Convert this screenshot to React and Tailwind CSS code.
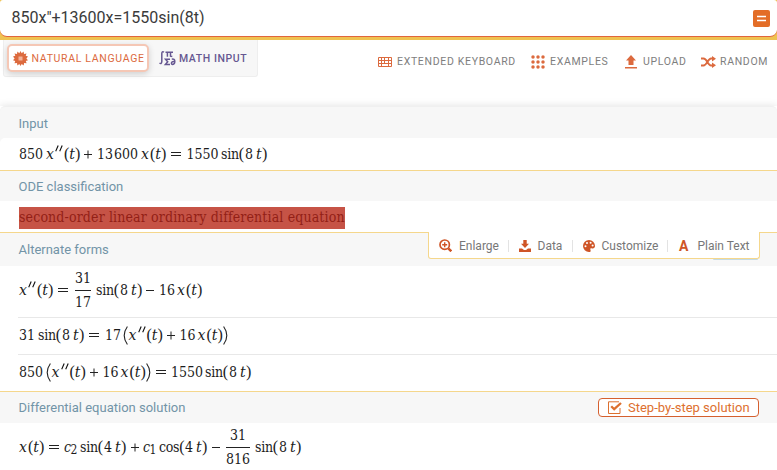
import React from "react";

const SERIF = "font-['DejaVu_Serif_Condensed','DejaVu_Serif',serif] [font-stretch:condensed]";
const ITALIC = "italic font-['DejaVu_Serif',serif] [font-stretch:normal]";

/* One piece of a formula; its width class sets the distance to the next piece. */
function T({ w, children, className = "" }) {
  return <span className={`shrink-0 whitespace-nowrap ${w} ${className}`}>{children}</span>;
}

function Par({ children }) {
  return <span className="font-['Liberation_Serif',serif] text-[16px] leading-none">{children}</span>;
}

function Primes() {
  return (
    <svg className="-mt-[11px] h-[7px] w-[9px] shrink-0" viewBox="0 0 9 7" stroke="#111" strokeWidth="1.1" fill="none">
      <path d="M3.2 .5L.7 6.3M7.2 .5L4.7 6.3" />
    </svg>
  );
}

function X({ w = "w-[9px]" }) {
  return <T w={w} className={ITALIC}>x</T>;
}

function OfT({ w = "w-[20px]" }) {
  return (
    <T w={w}>
      <Par>(</Par><span className={ITALIC}>t</span><Par>)</Par>
    </T>
  );
}

function Fn({ name, nw = "w-[24px]", arg, w = "w-[10px]" }) {
  return (
    <>
      <T w={nw}><span className="tracking-[-0.3px]">{name}</span><Par>(</Par></T>
      <T w="w-[11px]">{arg}</T>
      <T w="w-[6px]" className={ITALIC}>t</T>
      <T w={w}><Par>)</Par></T>
    </>
  );
}

function Op({ children, w }) {
  return (
    <span className={`flex shrink-0 items-center ${w}`}>
      <svg width="10" height="10" viewBox="0 0 10 10" stroke="#222" strokeWidth="1" fill="none">
        {children === "+" && <path d="M0 5.5h8M4 1.5v8" />}
        {children === "-" && <path d="M0 5.5h8" />}
        {children === "=" && <path d="M0 3.5h10M0 6.5h10" />}
      </svg>
    </span>
  );
}

function Big({ right, w }) {
  return (
    <span className={`flex shrink-0 ${w}`}>
      <svg width="5" height="19" viewBox="0 0 5 19" fill="none" stroke="#222" strokeWidth="1.1">
        <path d={right ? "M.6 .5Q7 9.5 .6 18.5" : "M4.4 .5Q-2 9.5 4.4 18.5"} />
      </svg>
    </span>
  );
}

function Frac({ top, bottom, w, bar }) {
  return (
    <span className={`flex shrink-0 ${w}`}>
      <span className={`flex flex-col items-center ${bar}`}>
        <span className="h-[24px] leading-[24px]">{top}</span>
        <span className="h-px w-full bg-[#222]" />
        <span className="h-[23px] leading-[23px]">{bottom}</span>
      </span>
    </span>
  );
}

function Eq({ className, children }) {
  return (
    <div className={`flex items-center text-[14px] leading-[20px] text-[#1c1c1c] ${SERIF} ${className}`}>{children}</div>
  );
}

function Header({ className, children }) {
  return (
    <div className={`flex items-center bg-[#f7f7f7] pl-[18.5px] text-[13px] text-[#7294a7] ${className}`}>{children}</div>
  );
}

function Menu({ icon, w, children }) {
  return (
    <div className={`flex shrink-0 items-center ${w}`}>
      {icon}
      <span className="pt-px text-[10.5px] tracking-[0.68px] text-[#7e7e7e]">{children}</span>
    </div>
  );
}

function Tool({ icon, w, last, children }) {
  return (
    <div className={`flex h-[12px] shrink-0 items-center text-[12px] text-[#777] ${w} ${last ? "" : "border-r border-[#e3e3e3]"}`}>
      {icon}
      {children}
    </div>
  );
}

const dots = [0, 1, 2, 3, 4, 5, 6, 7, 8];

export default function App() {
  return (
    <div className="flex h-[470px] w-[777px] flex-col overflow-hidden bg-white font-['Roboto',sans-serif]">
      <div className="h-[40px] shrink-0 bg-[#efc250]">
        <div className="flex h-[37px] items-center rounded-t-[3px] rounded-b-[7px] border-b border-[#e1653d] bg-white pr-[7px] pl-[11.5px]">
          <span className="flex-1 text-[16px] text-[#3b3b3b]">850x"+13600x=1550sin(8t)</span>
          <svg width="17" height="17" viewBox="0 0 17 17">
            <rect width="17" height="17" rx="2" fill="#e36d27" />
            <path d="M4 6.5h9M4 10.5h9" stroke="#fff" strokeWidth="1.4" />
          </svg>
        </div>
      </div>

      <div className="flex h-[66px] shrink-0 items-start">
        <div className="ml-[3px] flex h-[37px] w-[255px] shrink-0 items-start rounded-b-[3px] border border-t-0 border-[#eee] bg-[#f7f7f7] pt-[4px] pl-[3px]">
          <div className="flex h-[28px] w-[142px] shrink-0 items-center rounded-[5px] border-2 border-[#f5c7b5] bg-white pl-[4px] shadow-[0_2px_6px_rgba(0,0,0,0.16)]">
            <svg className="mr-[3.5px] shrink-0" width="15" height="15" viewBox="0 0 15 15">
              <path fill="#dc6a3e" d="M7.5 0l1.2 2.2L10.6.6l.4 2.4 2.5-.4-.8 2.2 2.3.6-1.6 2.1L15 9.2l-2.2.7.8 2.4-2.5-.2-.4 2.3-2-1.5L7.5 15l-1.2-2.1-1.9 1.5L4 12.1l-2.5.2.7-2.4L0 9.2l1.6-1.7L0 5.4l2.3-.6-.8-2.2 2.5.4L4.4.6l1.9 1.6z" />
              <path fill="#f2b39a" d="M5.500 5.500h4v4h-4z" />
            </svg>
            <span className="pt-[2px] text-[10.5px] tracking-[0.68px] whitespace-nowrap text-[#dc6a3e]">NATURAL LANGUAGE</span>
          </div>
          <div className="mt-[5px] ml-[10px] flex h-[18px] items-center text-[#665791]">
            <svg className="mr-[3px] shrink-0" width="17" height="16" viewBox="0 0 17 16" fill="none" stroke="currentColor" strokeWidth="1.5">
              <path d="M5 2.2Q3 .8 2.8 3.5V11.5Q2.6 14.5 .5 13M6.5 2.2H14M8.4 2v4.8M11.5 2v4.2l1.8.3M11 9.2H6.5l2.2 2.6-2.3 2.6H11M12.8 9.2q3-.6 3 2 0 3-2 3.2-1.6 0-1.3-1.6.6-1.7 3.2-1" />
            </svg>
            <span className="pt-[2px] text-[10.5px] font-medium tracking-[0.58px] whitespace-nowrap">MATH INPUT</span>
          </div>
        </div>
        <div className="ml-[120px] flex h-[43px] items-center">
          <Menu w="w-[153px]" icon={
            <svg className="mr-[5px]" width="14" height="10" viewBox="0 0 14 10" fill="none" stroke="#dc6a3e">
              <path d="M.5 .5h13v9H.5zM0 3.5h14M0 6.5h14M3.5 0v10M6.5 0v7M10.5 0v10" />
            </svg>}>EXTENDED KEYBOARD</Menu>
          <Menu w="w-[94px]" icon={
            <svg className="mr-[5px]" width="14" height="14" viewBox="0 0 14 14" fill="#dc6a3e">
              {dots.map((i) => <circle key={i} cx={2 + (i % 3) * 5} cy={2 + Math.floor(i / 3) * 5} r="1.75" />)}
            </svg>}>EXAMPLES</Menu>
          <Menu w="w-[76px]" icon={
            <svg className="mr-[6px]" width="12" height="14" viewBox="0 0 12 14" fill="#dc6a3e">
              <path d="M6 0l5 5.5H8.500V10h-5V5.500H1zM0 12h12v1.600H0z" />
            </svg>}>UPLOAD</Menu>
          <Menu w="w-[76px]" icon={
            <svg className="mr-[4px]" width="15" height="12" viewBox="0 0 15 12">
              <path fill="none" stroke="#dc6a3e" strokeWidth="1.8" d="M0 2.5h2.5C6 2.5 7 9.500 10 9.500h2M0 9.500h2.500C6 9.500 7 2.500 10 2.500h2" />
              <path fill="#dc6a3e" d="M11 0l4 2.700-4 2.800zM11 6.500l4 2.700-4 2.800z" />
            </svg>}>RANDOM</Menu>
        </div>
      </div>

      <div className="flex shrink-0 flex-col shadow-[0_0_8px_rgba(0,0,0,0.12)]">
        <Header className="h-[32px] rounded-t-[5px] border-t border-[#f0f0f0] pt-[3px]">Input</Header>
        <div className="bg-[#f7f7f7]">
          <Eq className="h-[32px] rounded-tl-[5px] bg-white pb-px pl-[19px]">
            <T w="w-[27px]">850</T><X /><Primes /><OfT w="w-[19.5px]" /><Op w="w-[13.5px]">+</Op>
            <T w="w-[17px]">13</T><T w="w-[27px]">600</T><X /><OfT w="w-[21px]" /><Op w="w-[15.5px]">=</Op>
            <T w="w-[34.5px]">1550</T><Fn name="sin" arg="8" />
          </Eq>
        </div>
        <Header className="h-[31px] border-t border-[#f5d78c] pt-px">ODE classification</Header>
        <div className="flex h-[31px] items-center bg-white pl-[19px]">
          <div className={`mt-[2px] flex h-[22px] w-[326px] items-center bg-[#c65346] pb-px text-[14px] tracking-[0.14px] whitespace-nowrap text-[#931f16] ${SERIF}`}>
            second-order linear ordinary differential equation
          </div>
        </div>
        <div className="flex h-[34px] items-start bg-[#f7f7f7]">
          <Header className="h-[34px] w-[428px] border-t border-[#f5d78c]">Alternate forms</Header>
          <div className="flex flex-col items-end">
            <div className="flex h-[27px] w-[332px] items-center rounded-b-[3px] border border-t-0 border-[#f5d78c] bg-white pt-px pl-[10px]">
              <Tool w="w-[70px]" icon={
                <svg className="mr-[7px] shrink-0" width="13" height="13" viewBox="0 0 13 13" fill="none" stroke="#cf5527">
                  <circle cx="5.7" cy="5.7" r="4.7" strokeWidth="1.7" /><path strokeWidth="1.4" d="M3.2 5.7h5M5.7 3.2v5" /><path strokeWidth="2.5" d="M9.3 9.3l3 3" />
                </svg>}>Enlarge</Tool>
              <Tool w="w-[64px] pl-[10px]" icon={
                <svg className="mr-[6.5px] shrink-0" width="12" height="12" viewBox="0 0 12 12" fill="#cf5527">
                  <path d="M4.3 0h3.4v3.8H10L6 8 2 3.8h2.3zM0 8.500h3l2 1.600h2l2-1.600h3V12H0z" />
                </svg>}>Data</Tool>
              <Tool w="w-[95px] pl-[10px]" icon={
                <svg className="mr-[6.5px] shrink-0" width="12" height="12" viewBox="0 0 12 12">
                  <path fill="#cf5527" d="M6 0a6 6 0 016 6c0 2-1.4 2.700-3 2.400-1.600-.3-2 .3-1.500 1.500C8 11.400 7.500 12 6 12A6 6 0 016 0z" />
                  <g fill="#fff"><circle cx="2.500" cy="6.200" r="1" /><circle cx="4" cy="3" r="1" /><circle cx="7.600" cy="2.800" r="1" /><circle cx="9.600" cy="5.500" r="1" /></g>
                </svg>}>Customize</Tool>
              <Tool last w="w-[88px] pl-[11px]" icon={
                <span className="mr-[9px] text-[14px] leading-none font-bold text-[#cf5527]">A</span>}>Plain Text</Tool>
            </div>
            <div className="mr-[2px] h-px w-[45px] rounded-b bg-[#c3dae4]" />
          </div>
          <div className="h-px flex-1 bg-[#f5d78c]" />
        </div>
        <div className="flex flex-col bg-white pl-[18px]">
          <Eq className="h-[52px] border-b border-[#e8e8e8] pb-[4px] pl-px">
            <X /><Primes /><OfT w="w-[21px]" /><Op w="w-[17px]">=</Op>
            <Frac w="w-[21px]" bar="w-[16px]" top="31" bottom="17" />
            <Fn name="sin" arg="8" w="w-[9px]" /><Op w="w-[13px]">-</Op>
            <T w="w-[18px]">16</T><X /><OfT />
          </Eq>
          <Eq className="h-[37px] border-b border-[#e8e8e8] pb-[2px] pl-px">
            <T w="w-[19px]">31</T><Fn name="sin" arg="8" w="w-[10px]" /><Op w="w-[16px]">=</Op>
            <T w="w-[18px]">17</T><Big w="w-[5.5px]" /><X /><Primes /><OfT /><Op w="w-[13px]">+</Op>
            <T w="w-[18px]">16</T><X /><OfT w="w-[16px]" /><Big right w="w-[5px]" />
          </Eq>
          <Eq className="h-[36px] pb-[2px] pl-px">
            <T w="w-[27px]">850</T><Big w="w-[5.5px]" /><X /><Primes /><OfT /><Op w="w-[13px]">+</Op>
            <T w="w-[18px]">16</T><X /><OfT w="w-[16px]" /><Big right w="w-[10px]" /><Op w="w-[15.5px]">=</Op>
            <T w="w-[34px]">1550</T><Fn name="sin" arg="8" />
          </Eq>
        </div>
        <Header className="h-[32px] border-t border-[#f5d78c] pr-[18px]">
          <span className="flex-1">Differential equation solution</span>
          <div className="flex h-[19px] w-[161px] items-center rounded-[4px] border border-[#d5602f] bg-white pl-[9px] text-[13px] text-[#dd702f]">
            <svg className="mr-[6px] shrink-0" width="14" height="13" viewBox="0 0 14 13" fill="none" stroke="#dd702f">
              <path d="M12 7v5.500H.5V.8H11" /><path strokeWidth="2.300" d="M3.200 5.200l3 3L13 2" />
            </svg>
            Step-by-step solution
          </div>
        </Header>
        <Eq className="h-[48px] bg-white pl-[19px]">
          <X /><OfT w="w-[21px]" /><Op w="w-[15px]">=</Op>
          <T w="w-[6.500px]" className="italic">c</T><T w="w-[9.500px]" className="mt-[6px] text-[12px]">2</T>
          <Fn name="sin" arg="4" w="w-[10px]" /><Op w="w-[12px]">+</Op>
          <T w="w-[6.500px]" className="italic">c</T><T w="w-[9.500px]" className="mt-[6px] text-[12px]">1</T>
          <Fn name="cos" nw="w-[26px]" arg="4" w="w-[10px]" /><Op w="w-[14px]">-</Op>
          <Frac w="w-[29px]" bar="w-[24px]" top="31" bottom="816" /><Fn name="sin" arg="8" />
        </Eq>
      </div>
    </div>
  );
}
